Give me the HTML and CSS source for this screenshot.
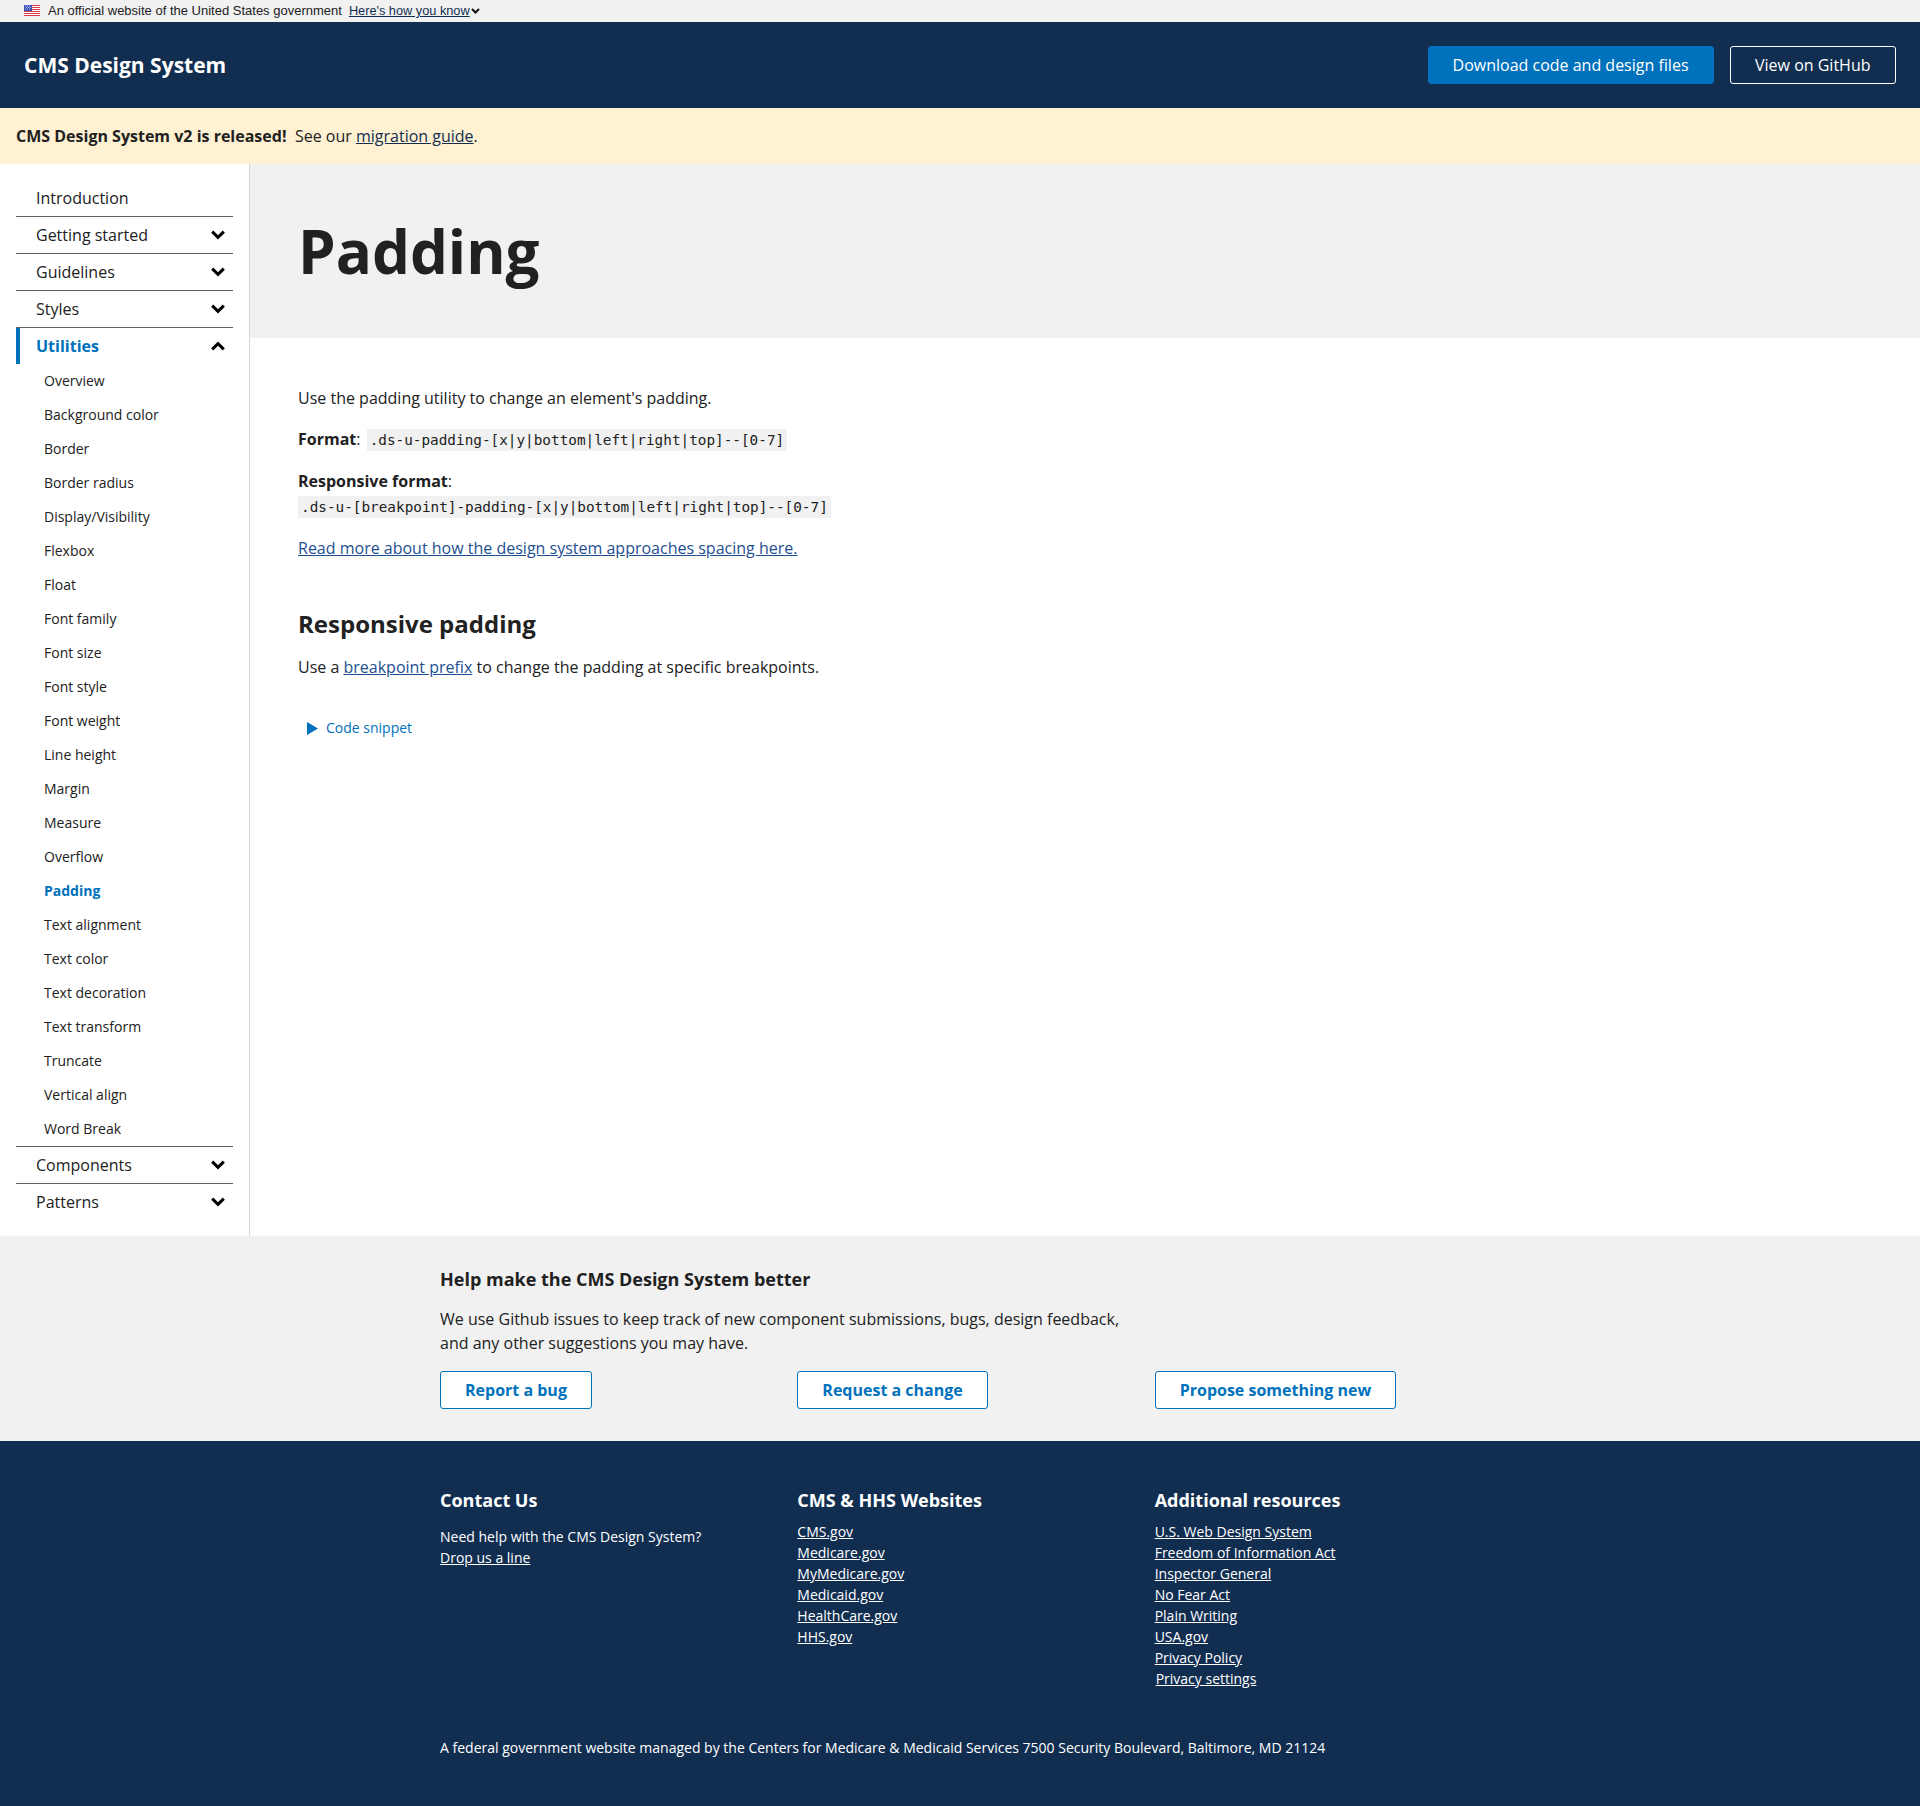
FILE: index.html
```html
<!DOCTYPE html>
<html lang="en">
<head>
<meta charset="utf-8">
<title>Padding - CMS Design System</title>
<link rel="stylesheet" href="styles.css">
</head>
<body>
<div class="gov">
  <svg class="flag" width="16" height="11" viewBox="0 0 16 11" aria-hidden="true"><rect width="16" height="11" fill="#fff"/><path d="M0 .5h16M0 2.5h16M0 4.5h16M0 6.5h16M0 8.5h16M0 10.5h16" stroke="#d8394b" stroke-width="1"/><rect width="8" height="6" fill="#3d4fb5"/><path d="M1 1h1M3 1h1M5 1h1M2 2.5h1M4 2.5h1M6 2.5h1M1 4h1M3 4h1M5 4h1" stroke="#dfe3f7" stroke-width=".8"/></svg>
  <span class="gov-text">An official website of the United States government</span>
  <a class="gov-link" href="#">Here's how you know</a>
  <svg class="gov-chev" width="9" height="6" viewBox="0 0 9 6" aria-hidden="true"><path d="M1 1l3.5 3.5L8 1" fill="none" stroke="#111" stroke-width="2"/></svg>
</div>
<header class="top">
  <a class="brand" href="#">CMS Design System</a>
  <div class="top-actions">
    <a class="btn btn-primary" href="#">Download code and design files</a>
    <a class="btn btn-inverse" href="#">View on GitHub</a>
  </div>
</header>
<div class="alert"><strong>CMS Design System v2 is released!</strong><span class="alert-rest">See our <a href="#">migration guide</a>.</span></div>
<div class="layout">
  <nav class="side">
    <div class="nav-row"><span>Introduction</span></div>
    <div class="nav-row nav-line"><span>Getting started</span><svg class="chev" viewBox="0 0 14 10"><path d="M1.2 1.6L7 7.4l5.8-5.8" /></svg></div>
    <div class="nav-row nav-line"><span>Guidelines</span><svg class="chev" viewBox="0 0 14 10"><path d="M1.2 1.6L7 7.4l5.8-5.8" /></svg></div>
    <div class="nav-row nav-line"><span>Styles</span><svg class="chev" viewBox="0 0 14 10"><path d="M1.2 1.6L7 7.4l5.8-5.8" /></svg></div>
    <div class="nav-row nav-line nav-open"><span>Utilities</span><svg class="chev" viewBox="0 0 14 10"><path d="M1.2 8.4L7 2.6l5.8 5.8" /></svg></div>
    <ul class="sub">
      <li>Overview</li><li>Background color</li><li>Border</li><li>Border radius</li><li>Display/Visibility</li><li>Flexbox</li><li>Float</li><li>Font family</li><li>Font size</li><li>Font style</li><li>Font weight</li><li>Line height</li><li>Margin</li><li>Measure</li><li>Overflow</li><li class="current">Padding</li><li>Text alignment</li><li>Text color</li><li>Text decoration</li><li>Text transform</li><li>Truncate</li><li>Vertical align</li><li>Word Break</li>
    </ul>
    <div class="nav-row nav-line"><span>Components</span><svg class="chev" viewBox="0 0 14 10"><path d="M1.2 1.6L7 7.4l5.8-5.8" /></svg></div>
    <div class="nav-row nav-line"><span>Patterns</span><svg class="chev" viewBox="0 0 14 10"><path d="M1.2 1.6L7 7.4l5.8-5.8" /></svg></div>
  </nav>
  <main class="main">
    <div class="hero"><h1>Padding</h1></div>
    <div class="content">
      <p class="intro">Use the padding utility to change an element's padding.</p>
      <p class="fmt"><strong>Format</strong>: <code>.ds-u-padding-[x|y|bottom|left|right|top]--[0-7]</code></p>
      <p class="fmt2"><strong>Responsive format</strong>:<br><code class="code2">.ds-u-[breakpoint]-padding-[x|y|bottom|left|right|top]--[0-7]</code></p>
      <p class="more"><a href="#">Read more about how the design system approaches spacing here.</a></p>
      <h2>Responsive padding</h2>
      <p class="use">Use a <a href="#">breakpoint prefix</a> to change the padding at specific breakpoints.</p>
      <div class="snippet"><svg width="11" height="13" viewBox="0 0 11 13" aria-hidden="true"><path d="M0 0l11 6.5L0 13z" fill="#0071bc"/></svg><span>Code snippet</span></div>
    </div>
  </main>
</div>
<section class="help">
  <div class="wrap">
    <h3>Help make the CMS Design System better</h3>
    <p>We use Github issues to keep track of new component submissions, bugs, design feedback,<br>and any other suggestions you may have.</p>
    <div class="cols help-cols">
      <div><a class="btn btn-outline" href="#">Report a bug</a></div>
      <div><a class="btn btn-outline" href="#">Request a change</a></div>
      <div><a class="btn btn-outline" href="#">Propose something new</a></div>
    </div>
  </div>
</section>
<footer class="foot">
  <div class="wrap">
    <div class="cols">
      <div>
        <h4>Contact Us</h4>
        <p class="need">Need help with the CMS Design System?<br><a href="#">Drop us a line</a></p>
      </div>
      <div>
        <h4>CMS &amp; HHS Websites</h4>
        <ul class="links"><li><a href="#">CMS.gov</a></li><li><a href="#">Medicare.gov</a></li><li><a href="#">MyMedicare.gov</a></li><li><a href="#">Medicaid.gov</a></li><li><a href="#">HealthCare.gov</a></li><li><a href="#">HHS.gov</a></li></ul>
      </div>
      <div>
        <h4>Additional resources</h4>
        <ul class="links"><li><a href="#">U.S. Web Design System</a></li><li><a href="#">Freedom of Information Act</a></li><li><a href="#">Inspector General</a></li><li><a href="#">No Fear Act</a></li><li><a href="#">Plain Writing</a></li><li><a href="#">USA.gov</a></li><li><a href="#">Privacy Policy</a></li><li class="shift"><a href="#">Privacy settings</a></li></ul>
      </div>
    </div>
    <p class="legal">A federal government website managed by the Centers for Medicare &amp; Medicaid Services 7500 Security Boulevard, Baltimore, MD 21124</p>
  </div>
</footer>
</body>
</html>
```
FILE: styles.css
```css
* { box-sizing: border-box; }
html, body { margin: 0; padding: 0; }
body { font-family: "Open Sans", sans-serif; color: #212121; background: #fff; font-size: 16px; }
a { color: inherit; }

.gov { height: 22px; background: #f1f1f1; display: flex; align-items: center; padding: 0 0 1px 24px; font-family: "Liberation Sans", sans-serif; font-size: 13px; color: #212121; }
.flag { margin-right: 8px; }
.gov-text { margin-right: 7px; }
.gov-link { color: #112e51; font-size: 12.75px; }
.gov-chev { margin-left: 1px; }

.top { height: 86px; background: #112e51; display: flex; align-items: center; justify-content: space-between; padding: 0 24px; }
.brand { color: #fff; font-size: 21px; font-weight: 700; text-decoration: none; }
.top-actions { display: flex; gap: 16px; }
.btn { display: inline-block; height: 38px; line-height: 36px; padding: 0 24px; border: 1px solid transparent; border-radius: 3px; font-size: 16px; text-decoration: none; text-align: center; }
.btn-primary { background: #0071bc; color: #fff; border-color: #0071bc; }
.btn-inverse { color: #fff; border-color: #fff; padding: 0 24.5px; }
.btn-outline { background: #fff; color: #0071bc; border-color: #0071bc; font-weight: 700; }

.alert { height: 56px; background: #fff1d2; display: flex; align-items: center; padding-left: 16px; font-size: 16px; }
.alert-rest { margin-left: 8.5px; }
.alert a { color: #112e51; }

.layout { display: flex; height: 1072px; }
.side { width: 250px; flex: none; border-right: 1px solid #d6d7d9; padding: 15px 16px 0; }
.nav-row { height: 37px; display: flex; align-items: center; justify-content: space-between; padding: 0 8px 0 20px; font-size: 16px; color: #212121; }
.nav-line { border-top: 1px solid #5b616b; }
.nav-open { color: #0071bc; font-weight: 700; position: relative; }
.nav-open::before { content: ""; position: absolute; left: 0; top: 0; bottom: 0; width: 4px; background: #0071bc; }
.chev { width: 14px; height: 10px; }
.chev path { fill: none; stroke: #000; stroke-width: 3; }
.sub { list-style: none; margin: 0; padding: 0 0 0 28px; }
.sub li { height: 34px; line-height: 34px; font-size: 14px; color: #212121; }
.sub .current { color: #0071bc; font-weight: 700; }

.main { flex: 1; min-width: 0; }
.hero { height: 174px; background: #f1f1f1; padding: 0 48px; display: flex; align-items: center; }
h1 { margin: 0; font-size: 60px; font-weight: 700; line-height: 1.3; color: #212121; }
.content { padding: 48px 48px 0 48px; font-size: 16px; line-height: 24px; }
.content p { margin: 0; }
.fmt { margin-top: 17px !important; }
.fmt2 { margin-top: 17px !important; line-height: 25px; }
.more { margin-top: 16px !important; }
code { font-family: "DejaVu Sans Mono", monospace; font-size: 14.35px; background: #f1f1f1; padding: 3px; margin-left: 2px; }
.code2 { margin-left: 0; }
.content a { color: #1d4f91; }
h2 { margin: 48px 0 0; font-size: 24px; line-height: 1.3; font-weight: 700; color: #212121; }
.use { margin-top: 16px !important; }
.snippet { margin-top: 37px; margin-left: 9px; display: flex; align-items: center; gap: 8px; color: #0071bc; font-size: 14px; line-height: 24px; }

.wrap { width: 1072px; margin-left: 440px; }
.help { background: #f1f1f1; height: 205px; padding-top: 29px; }
.help h3 { margin: 0; font-size: 18px; line-height: 29px; font-weight: 700; }
.help p { margin: 13px 0 0; font-size: 16px; line-height: 24px; }
.cols { display: grid; grid-template-columns: repeat(3, 357.33px); }
.help-cols { margin-top: 16px; }
.foot { background: #112e51; height: 365px; padding-top: 44px; color: #fff; }
.foot h4 { margin: 0; font-size: 18px; line-height: 30px; font-weight: 700; }
.need { margin: 11px 0 0; font-size: 14px; line-height: 21px; }
.links { list-style: none; margin: 6px 0 0; padding: 0; font-size: 14px; line-height: 21px; }
.shift { padding-left: 1px; }
.legal { margin: 48px 0 0; font-size: 14px; line-height: 21px; }
```
